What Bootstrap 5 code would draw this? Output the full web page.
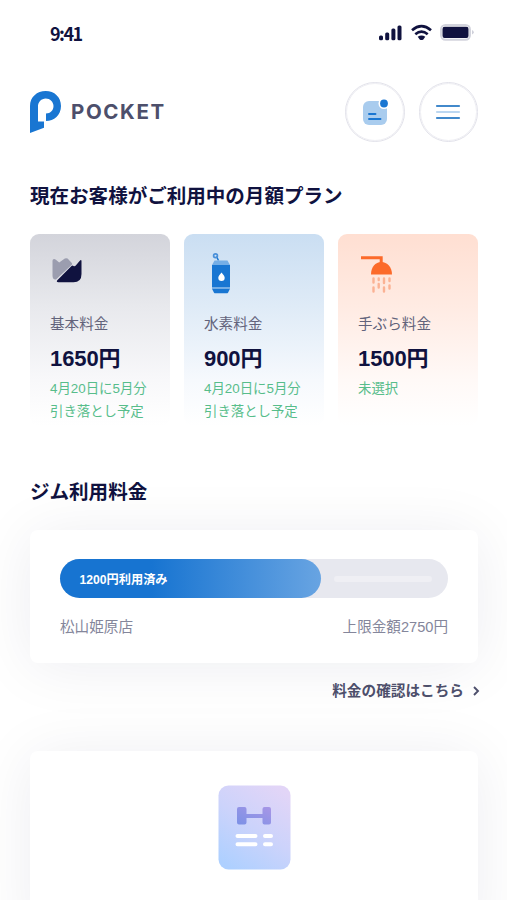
<!DOCTYPE html>
<html lang="ja">
<head>
<meta charset="utf-8">
<meta name="viewport" content="width=device-width, initial-scale=1">
<title>POCKET</title>
<link href="https://cdn.jsdelivr.net/npm/bootstrap@5.3.0/dist/css/bootstrap.min.css" rel="stylesheet">
<style>
  :root { --navy: #10123f; --slate: #4d4f6b; --blue: #1976d2; --mint: #57bd8b; }
  body { font-family: "Liberation Sans", "Noto Sans CJK JP", sans-serif; color: var(--navy); background: #fff; height: 900px; overflow: hidden; }
  svg { display: block; flex: none; }
  .page { width: 507px; height: 900px; overflow: hidden; padding: 0 29px 0 30px; }
  .status { height: 66px; padding: 0 3px 0 20px; }
  .clock { font: 600 18px/24px "Noto Sans CJK JP", sans-serif; letter-spacing: -1.5px; }
  .topbar { height: 60px; margin-top: 16px; }
  .brand { gap: 9px; }
  .brand-name { font: 700 20.5px/30px Inter, sans-serif; letter-spacing: 1.6px; color: var(--slate); }
  .actions { gap: 14px; }
  .round-btn { width: 59.5px; height: 59.5px; border: 1.500px solid #e2e2ea; outline: .5px solid #eeeef3; outline-offset: -2px; background: #fff; padding: 0; }
  .heading { font-size: 19.55px; line-height: 30px; font-weight: 700; margin: 0; }
  .heading-plan { margin-top: 39px; }
  .heading-gym { margin-top: 51px; }
  .plans { gap: 14px; margin-top: 23px; }
  .plan { flex: 1 1 0; height: 192px; border-radius: 9px; padding: 15px 0 0 20px; }
  .plan-base { background: linear-gradient(#d3d4db, #e8e9ed 38%, #f8f8fa 76%, #fff); }
  .plan-water { background: linear-gradient(#cadef2, #dfebf7 38%, #f6f9fd 76%, #fff); }
  .plan-shower { background: linear-gradient(#ffdfd2, #ffebe3 38%, #fff9f7 76%, #fff); }
  .plan-name { font-size: 14.6px; line-height: 22px; color: #62637b; margin-top: 16px; }
  .plan-price { font-size: 22px; line-height: 32px; font-weight: 700; letter-spacing: -.1px; margin-top: 8px; }
  .plan-note { font-size: 13.4px; line-height: 23px; color: var(--mint); margin-top: 2px; }
  .panel { background: #fff; border-radius: 8px; box-shadow: 0 4px 60px rgba(16, 30, 70, .075); }
  .usage { height: 133px; margin-top: 23px; padding: 29px 30px 0; }
  .meter { height: 39px; border-radius: 20px; background: #e7e8ef; }
  .meter-fill { border-radius: 20px; padding: 3px 0 0 19.5px; font-size: 12.2px; font-weight: 700; background: linear-gradient(90deg, #1774d1 35%, #68a4e2); }
  .meter-rest { height: 6px; border-radius: 3px; background: #efeff4; margin: 0 16px 0 13px; }
  .caption-row { font-size: 14.6px; line-height: 22px; color: #84869b; margin-top: 18px; }
  .more { font-size: 14.65px; line-height: 22px; font-weight: 700; color: var(--slate); margin-top: 17px; gap: 8px; margin-right: -2px; }
  .menu-panel { height: 190px; margin-top: 49px; padding-top: 34px; }
</style>
</head>
<body>
<div class="page d-flex flex-column">
  <div class="status d-flex align-items-center justify-content-between flex-shrink-0">
    <span class="clock">9:41</span>
    <svg width="97" height="18" viewBox="0 0 97 18">
      <g fill="#10123f">
        <rect x="1" y="11.500" width="4" height="4.800" rx="1.500"/><rect x="7.200" y="8.500" width="4" height="7.800" rx="1.500"/><rect x="13.400" y="4.500" width="4" height="11.800" rx="1.500"/><rect x="19.500" y="1.500" width="4" height="14.800" rx="1.500"/>
        <path d="M39.700 12.700q3.800-2.600 7.600 0l-2 2.700q-1.800 1.300-3.600 0z"/>
        <rect x="64.500" y="2.800" width="26" height="11.200" rx="2"/>
      </g>
      <path d="M34 6.200q9.500-8 19 0M37.300 10.200q6.200-5 12.400 0" fill="none" stroke="#10123f" stroke-width="2.700"/>
      <rect x="63" y="1" width="29" height="14.800" rx="4.500" fill="none" stroke="#d3d4dd" stroke-width="2"/>
      <path d="M94 6v4.500q1.800-.8 1.800-2.250T94 6z" fill="#cfd0da"/>
    </svg>
  </div>

  <header class="topbar d-flex align-items-center justify-content-between flex-shrink-0">
    <div class="brand d-flex align-items-center">
      <svg width="32" height="44" viewBox="0 0 32 44">
        <path d="M0 43V16C0 7 7 1 15.700 1S31 7 31 16s-7 15-15 15v-7.500c4.500 0 7.500-3.300 7.500-7.500s-3.500-7.600-7.800-7.600S8 12 8 16v15.500h6v6.300z" fill="#1976d2"/>
      </svg>
      <span class="brand-name">POCKET</span>
    </div>
    <div class="actions d-flex">
      <button class="round-btn rounded-circle d-flex align-items-center justify-content-center" type="button" aria-label="お知らせ">
        <svg width="28" height="28" viewBox="0 0 28 28">
          <rect x="2" y="3" width="24" height="24" rx="6" fill="#a9ccee"/>
          <circle cx="23" cy="5.500" r="5.500" fill="#fff"/><circle cx="23" cy="5.500" r="3.900" fill="#1976d2"/>
          <path d="M8 16h6.500M8 21h11.500" stroke="#1976d2" stroke-width="1.900" stroke-linecap="round"/>
        </svg>
      </button>
      <button class="round-btn rounded-circle d-flex align-items-center justify-content-center" type="button" aria-label="メニュー">
        <svg width="26" height="18" viewBox="0 0 26 18" stroke-width="2.200" stroke-linecap="round">
          <path d="M2 3h22M2 15h22" stroke="#4289cb"/><path d="M2 9h22" stroke="#bcd7f1"/>
        </svg>
      </button>
    </div>
  </header>

  <h2 class="heading heading-plan flex-shrink-0">現在お客様がご利用中の月額プラン</h2>
  <section class="plans d-flex flex-shrink-0">
    <article class="plan plan-base">
      <svg width="50" height="48" viewBox="0 0 50 48">
        <path d="M2.500 12.500c0-2.800 1.800-3 3.400-1.700l3.300 2.800 5.600-4q1.400-.9 2.800 0l4.200 4.400q.8.900 0 1.800L6 30.500q-3.500.5-3.500-4z" fill="#9b9daf"/>
        <path d="M7.300 31.200 21.500 17q.9-.8 2 0 1.200.6 2.300-.5l4-4.800q1.700-1.500 1.700.6V25q0 8.300-8 8.300H8.300q-2.300-.3-1-2.100z" fill="#10123f"/>
      </svg>
      <div class="plan-name">基本料金</div>
      <div class="plan-price">1650円</div>
      <div class="plan-note">4月20日に5月分<br>引き落とし予定</div>
    </article>
    <article class="plan plan-water">
      <svg width="50" height="48" viewBox="0 0 50 48">
        <path d="m14.500 11.500-2-4" stroke="#1976d2" stroke-width="1.500"/>
        <circle cx="11.500" cy="6.800" r="1.900" fill="none" stroke="#4a90d9" stroke-width="1.700"/>
        <path d="M10.500 11.500h13l2.500 4.500H8z" fill="#75aee6"/>
        <rect x="8" y="16" width="18" height="22" fill="#1976d2"/>
        <path d="M8 38h18v1.700H8z" fill="#75aee6"/>
        <path d="M8 39.700h18l-2 4q-.5.600-1.500.6h-11q-1 0-1.500-.6z" fill="#1976d2"/>
        <path d="M17.500 23.500q3.200 3.500 3.200 5.200a3.200 3.200 0 0 1-6.400 0q0-1.700 3.200-5.200z" fill="#fff"/>
      </svg>
      <div class="plan-name">水素料金</div>
      <div class="plan-price">900円</div>
      <div class="plan-note">4月20日に5月分<br>引き落とし予定</div>
    </article>
    <article class="plan plan-shower">
      <svg width="50" height="48" viewBox="0 0 50 48">
        <path d="M3 8.800h20.200v6" fill="none" stroke="#fc6a2a" stroke-width="3"/>
        <path d="M13 25.500c0-7.500 4.300-12.500 10.300-12.500S34 18 34 25.500z" fill="#fc6a2a"/>
        <g fill="none" stroke="#fbb294" stroke-width="2.400" stroke-linecap="round">
          <path d="M15.500 29.500v4M15.500 38.500v4M26 29.500v4.500M26 38.500v4"/>
          <path d="M20.700 29.500v1.500M20.700 35v3.500M31.500 29.500v2.500M31.500 36.500v3"/>
        </g>
      </svg>
      <div class="plan-name">手ぶら料金</div>
      <div class="plan-price">1500円</div>
      <div class="plan-note">未選択</div>
    </article>
  </section>

  <h2 class="heading heading-gym flex-shrink-0">ジム利用料金</h2>
  <section class="panel usage flex-shrink-0">
    <div class="meter d-flex align-items-center">
      <div class="meter-fill h-100 d-flex align-items-center text-white" style="width:67.3%">1200円利用済み</div>
      <div class="meter-rest flex-grow-1"></div>
    </div>
    <div class="caption-row d-flex justify-content-between">
      <span>松山姫原店</span><span>上限金額2750円</span>
    </div>
  </section>
  <a href="#" class="more d-flex align-items-center align-self-end text-decoration-none flex-shrink-0">料金の確認はこちら
    <svg width="8" height="12" viewBox="0 0 8 12"><path d="m2 2 4 4-4 4" fill="none" stroke="#4d4f6b" stroke-width="1.900"/></svg>
  </a>

  <section class="panel menu-panel d-flex justify-content-center flex-shrink-0">
    <svg width="73" height="85" viewBox="0 0 73 85">
      <defs>
        <linearGradient id="sheet" x1=".2" y1="1" x2=".8" y2="0"><stop stop-color="#aed0ff"/><stop offset=".5" stop-color="#ccd3fb"/><stop offset="1" stop-color="#e2d5f7"/></linearGradient>
        <linearGradient id="bell" x1="0" y1="1" x2="1" y2="0"><stop stop-color="#7b91e6"/><stop offset="1" stop-color="#a896e6"/></linearGradient>
      </defs>
      <rect x=".5" y=".5" width="72" height="84" rx="10" fill="url(#sheet)"/>
      <path d="M21 22h5.500q2 0 2 2v5h16v-5q0-2 2-2H51q2 0 2 2v13.500q0 2-2 2h-4.500q-2 0-2-2V33h-16v4.500q0 2-2 2H21q-2 0-2-2V24q0-2 2-2z" fill="url(#bell)"/>
      <path d="M19.500 51h18M47 51h6M19.500 59.300h18M47 59.300h6" stroke="#fff" stroke-width="4" stroke-linecap="round"/>
    </svg>
  </section>
</div>
<script src="https://cdn.jsdelivr.net/npm/bootstrap@5.3.0/dist/js/bootstrap.bundle.min.js"></script>
</body>
</html>
